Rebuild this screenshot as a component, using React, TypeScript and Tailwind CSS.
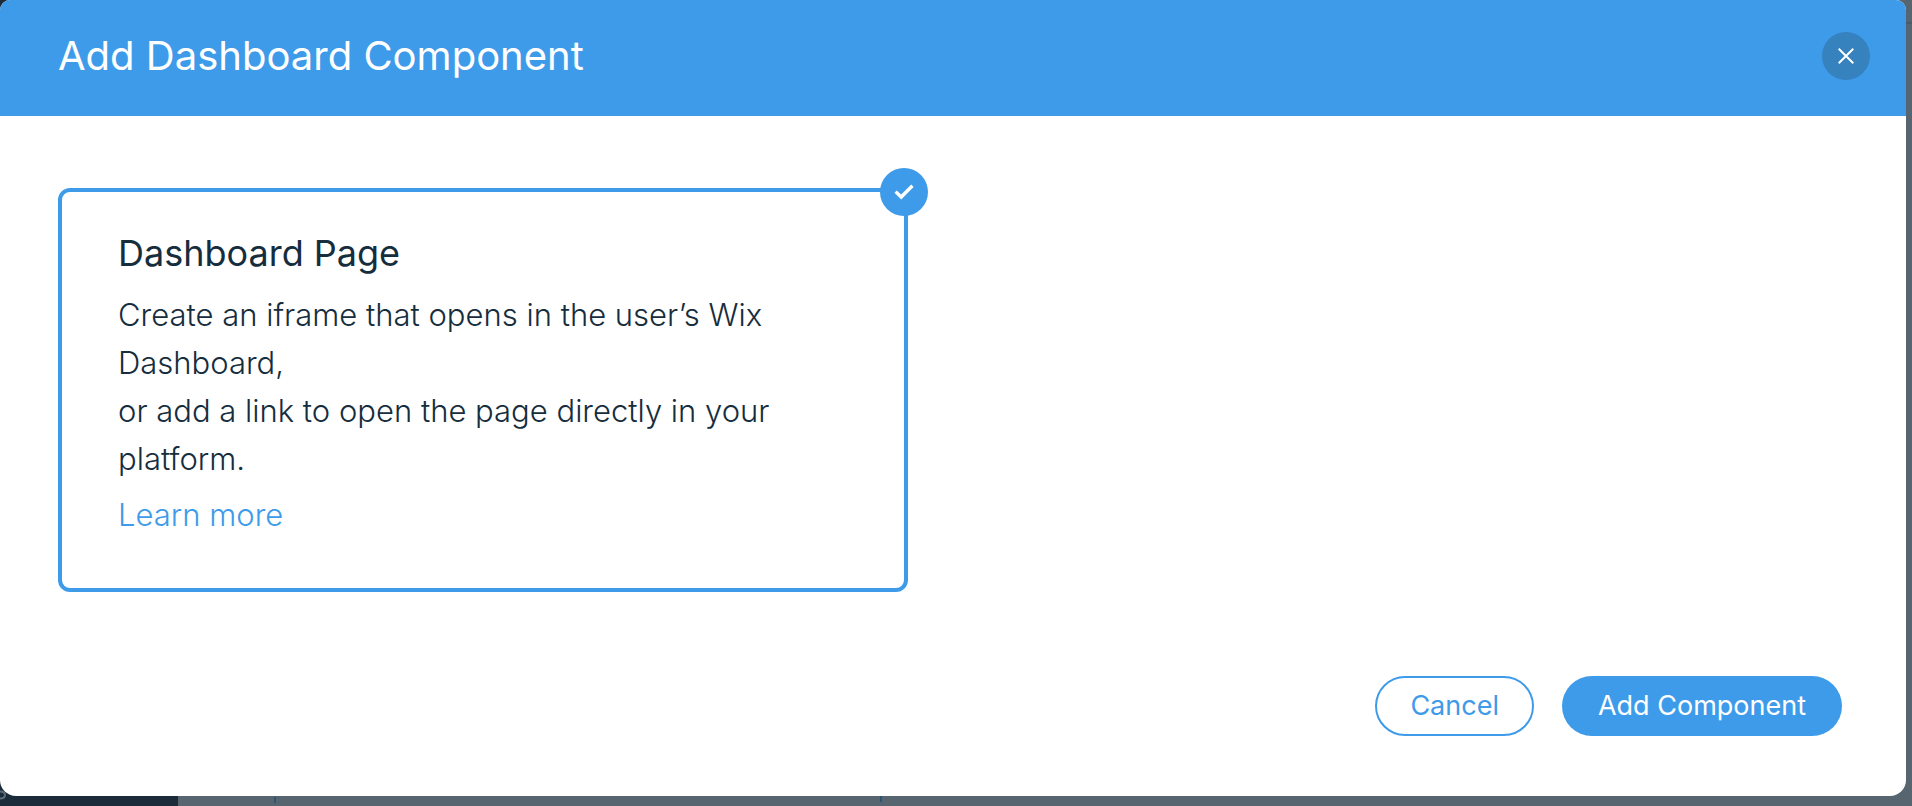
function Backdrop() {
  return (
    <div className="col-start-1 row-start-1 flex bg-[#566570]" aria-hidden="true">
      <div className="flex w-[178px] items-end bg-[#1c2b3a]">
        <svg className="mb-[5px] block h-3 w-[7px]" viewBox="0 0 7 12" fill="none">
          <path d="M0 2.500c3 0 5 1.300 5 3.500s-2 3.500-5 3.500" stroke="#5c6c78" strokeWidth="2" />
        </svg>
      </div>
      <div className="flex w-[98px] items-end justify-end">
        <div className="mb-[3px] h-[6px] w-[2px] bg-[#2b5672]" />
      </div>
      <div className="flex w-[606px] items-end justify-end">
        <div className="mb-1 h-[6px] w-[2px] bg-[#2b5672]" />
      </div>
      <div className="flex flex-1 flex-col items-end pt-[22px]">
        <div className="h-[2px] w-2 bg-[#4b5c68]" />
      </div>
    </div>
  );
}

export default function App() {
  return (
    <div className="grid min-h-screen font-[Inter,'Liberation_Sans',sans-serif]">
      <Backdrop />
      <div className="z-10 col-start-1 row-start-1 flex pr-[6px] pb-[10px]">
        <section
          role="dialog"
          aria-labelledby="dialog-title"
          className="flex flex-1 flex-col overflow-hidden rounded-t-[10px] rounded-b-2xl bg-white"
        >
          <header className="flex h-[116px] items-start justify-between bg-[#3e9be9] pt-8 pr-9 pl-[58px] text-white">
            <h1 id="dialog-title" className="text-[40px] leading-[48px]">
              Add Dashboard Component
            </h1>
            <button
              type="button"
              aria-label="Close"
              className="flex size-12 items-center justify-center rounded-full bg-[#3582bf]"
            >
              <svg className="size-4" viewBox="0 0 16 16" fill="none" stroke="currentColor" strokeWidth="2">
                <path d="M0.700 0.700l14.600 14.600M15.300 0.700L0.700 15.300" />
              </svg>
            </button>
          </header>

          <main className="grid flex-1 grid-cols-2 items-start gap-[90px] px-[58px] pt-[72px]">
            <article className="relative rounded-xl border-4 border-[#3e9be9] px-14 pt-[37px] pb-[49px] text-[#162d3d]">
              <h2 className="text-[36px] leading-[48px]">Dashboard Page</h2>
              <p className="mt-[14px] text-[31px] leading-[48px] font-light">
                Create an iframe that opens in the user’s Wix Dashboard,
                <br />
                or add a link to open the page directly in your platform.
              </p>
              <a href="#learn-more" className="mt-2 block text-[31px] leading-[48px] font-light text-[#3e9be9]">
                Learn more
              </a>
              <span className="absolute -top-6 -right-6 flex size-12 items-center justify-center rounded-full bg-[#3e9be9]">
                <svg className="h-4 w-5" viewBox="0 0 20 16" fill="none" stroke="white" strokeWidth="3.400">
                  <path d="M1.600 7.600l5.600 5.400L18.400 1.800" />
                </svg>
              </span>
            </article>
          </main>

          <footer className="flex justify-end gap-7 pr-16 pb-[60px] text-[27px] leading-8">
            <button type="button" className="h-[60px] rounded-full border-2 border-[#3e9be9] px-[33px] text-[#3e9be9]">
              Cancel
            </button>
            <button type="button" className="h-[60px] rounded-full bg-[#3e9be9] px-9 text-white">
              Add Component
            </button>
          </footer>
        </section>
      </div>
    </div>
  );
}
